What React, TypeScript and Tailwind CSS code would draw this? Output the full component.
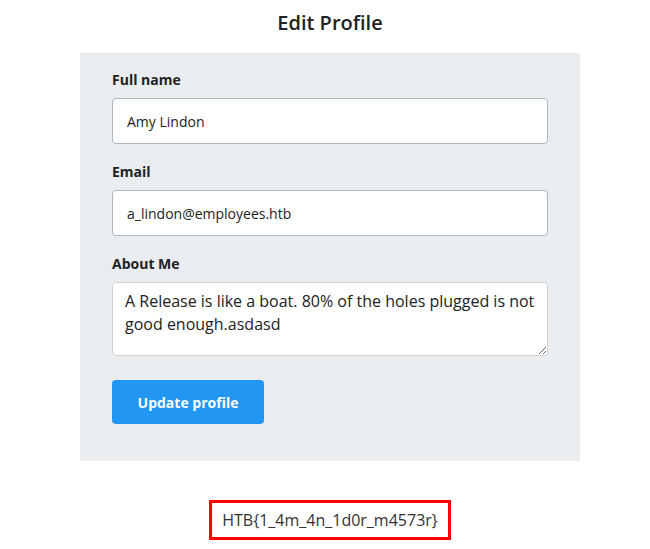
export default function App() {
  return (
    <div className="w-full bg-white font-['Open_Sans',sans-serif] text-[#222]">
      <div className="ml-[80px] w-[500px]">
        <h1 className="pt-[9px] text-center text-[20px] font-semibold leading-[28px] text-[#222]">
          Edit Profile
        </h1>
        <form className="mt-[16px] bg-[#e9edf0] px-[32px] pt-[17px] pb-[37px]">
          <label className="block text-[14px] font-bold leading-[20px]">Full name</label>
          <input
            className="mt-[8px] block h-[46px] w-full rounded-[4px] border border-[#aab8c2] bg-white px-[14px] text-[14px] text-[#222] outline-none"
            defaultValue="Amy Lindon"
          />
          <label className="mt-[18px] block text-[14px] font-bold leading-[20px]">Email</label>
          <input
            className="mt-[8px] block h-[46px] w-full rounded-[4px] border border-[#aab8c2] bg-white px-[14px] text-[14px] text-[#222] outline-none"
            defaultValue="a_lindon@employees.htb"
          />
          <label className="mt-[18px] block text-[14px] font-bold leading-[20px]">About Me</label>
          <textarea
            className="mt-[8px] block h-[74px] w-full rounded-[4px] border border-[#cfd3d6] bg-white px-[12px] py-[7px] text-[16px] leading-[23px] text-[#222] outline-none"
            defaultValue="A Release is like a boat. 80% of the holes plugged is not good enough.asdasd"
          />
          <button
            type="button"
            className="mt-[24px] h-[44px] w-[152px] rounded-[4px] bg-[#2196f3] text-[14px] font-bold text-white"
          >
            Update profile
          </button>
        </form>
        <div className="mt-[39px] flex justify-center">
          <div className="border-[3px] border-[#ff0000] px-[10px] py-[5px] text-[16px] leading-[24px] text-[#333]">
            HTB{"{"}1_4m_4n_1d0r_m4573r{"}"}
          </div>
        </div>
      </div>
    </div>
  )
}
